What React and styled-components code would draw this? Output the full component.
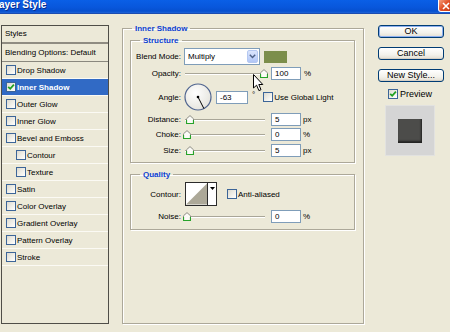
import React from 'react';
import styled, { createGlobalStyle } from 'styled-components';

const FONT = `"Liberation Sans", Arial, sans-serif`;

const GlobalStyle = createGlobalStyle`
  html, body { margin: 0; padding: 0; background: #ece9d8; }
  #root { width: 450px; height: 332px; overflow: hidden; }
  * { box-sizing: border-box; }
`;

const Window = styled.div`
  position: relative;
  width: 450px;
  height: 332px;
  display: flex;
  flex-direction: column;
  background: #ece9d8;
  font-family: ${FONT};
  font-size: 8px;
  color: #000;
  overflow: hidden;
`;

const TitleBar = styled.div`
  flex: none;
  height: 14px;
  display: flex;
  justify-content: space-between;
  align-items: flex-start;
  background: linear-gradient(180deg, #0a5fe6 0%, #0857dc 55%, #0650cf 85%, #1d63d8 100%);
  border-bottom: 1px solid #1b4cb0;
`;

const TitleText = styled.span`
  font: bold 10px/10px ${FONT};
  color: #fff;
  text-shadow: 1px 1px 0 #0b2d8c;
  margin-left: -1px;
`;

const CloseButton = styled.span`
  flex: none;
  width: 15px;
  height: 12px;
  margin-right: -3px;
  background: linear-gradient(135deg, #f3a080 0%, #e2532a 45%, #c53a14 100%);
  border: 1px solid #fff;
  border-top: none;
  border-radius: 0 0 0 3px;
  display: flex;
  align-items: center;
  justify-content: center;
`;

const Body = styled.div`
  flex: 1;
  display: flex;
  align-items: flex-start;
`;

/* ---------- Styles list ---------- */
const StylesPanel = styled.div`
  flex: none;
  width: 108px;
  height: 299px;
  margin: 11px 0 0 1px;
  border: 1px solid #4f4e48;
  display: flex;
  flex-direction: column;
`;

const PanelHeader = styled.div`
  height: 18px;
  line-height: 16px;
  padding-left: 3px;
  border-bottom: 2px solid #8f8c82;
`;

const StyleRow = styled.div`
  height: ${p => p.$h || 17}px;
  display: flex;
  align-items: center;
  gap: 1px;
  padding-left: ${p => (p.$indent ? 14 : p.$plain ? 3 : 4)}px;
  border-bottom: 1px solid ${p => (p.$dark ? '#8a887e' : '#fbfaf4')};
  background: ${p => (p.$selected ? '#316ac5' : 'transparent')};
  color: ${p => (p.$selected ? '#fff' : '#000')};
  font-weight: ${p => (p.$selected ? 'bold' : 'normal')};
  white-space: nowrap;
`;

const Box = styled.span`
  flex: none;
  width: 10px;
  height: 10px;
  border: 1px solid #3c6598;
  background: linear-gradient(135deg, #dcdad0 0%, #f4f3ee 65%, #ffffff 100%);
  display: inline-flex;
  align-items: center;
  justify-content: center;
  margin-left: ${p => p.$ml || 0}px;
`;

const Tick = () => (
  <svg width="8" height="8" viewBox="0 0 8 8">
    <path d="M1.2 3.8 L3.2 5.8 L6.9 1.6" fill="none" stroke="#21a121" strokeWidth="1.8" />
  </svg>
);

const CheckBox = ({ checked, ml }) => <Box $ml={ml}>{checked && <Tick />}</Box>;

/* ---------- Group boxes ---------- */
const Group = styled.fieldset`
  flex: none;
  margin: ${p => p.$m || '0'};
  padding: ${p => p.$pad};
  width: ${p => (p.$w ? `${p.$w}px` : 'auto')};
  height: ${p => (p.$h ? `${p.$h}px` : 'auto')};
  border: 1px solid #aca899;
  box-shadow: inset 1px 1px 0 #fff, 1px 1px 0 #fff;
  min-width: 0;
`;

const Legend = styled.legend`
  margin-left: ${p => p.$ml}px;
  padding: 0 3px;
  font: bold 8px/11px ${FONT};
  color: #0b3fd1;
`;

const FieldRow = styled.div`
  display: flex;
  align-items: center;
  height: ${p => p.$h}px;
  margin-top: ${p => p.$mt || 0}px;
  white-space: nowrap;
`;

const Label = styled.span`
  flex: none;
  width: 50px;
  text-align: right;
`;

const Select = styled.div`
  flex: none;
  width: 76px;
  height: 17px;
  margin-left: 3px;
  border: 1px solid #7f9db9;
  background: #fff;
  display: flex;
  align-items: center;
  justify-content: space-between;
  padding: 1px 1px 1px 3px;
`;

const SelectButton = styled.span`
  flex: none;
  width: 11px;
  height: 13px;
  border: 1px solid #b5c8f1;
  border-radius: 2px;
  background: linear-gradient(180deg, #dbe5fc 0%, #c3d4fa 60%, #b1c6f6 100%);
  display: flex;
  align-items: center;
  justify-content: center;
`;

const Swatch = styled.span`
  flex: none;
  width: 23px;
  height: 12px;
  margin-left: 4px;
  background: #7c8e4b;
`;

const SliderBox = styled.div`
  flex: none;
  position: relative;
  width: 80px;
  height: 13px;
  margin-left: 4px;
  display: flex;
  align-items: center;
`;

const Track = styled.div`
  width: 100%;
  height: 2px;
  border-top: 1px solid #a9a698;
  border-bottom: 1px solid #fff;
`;

const Thumb = styled.svg`
  position: absolute;
  top: 2px;
`;

const Cursor = styled.svg`
  position: absolute;
  left: 68px;
  top: 7px;
`;

const NumInput = styled.span`
  flex: none;
  width: ${p => p.$w || 30}px;
  height: 13px;
  margin-left: ${p => p.$ml || 6}px;
  border: 1px solid #7f9db9;
  background: #fff;
  padding-left: 3px;
  line-height: 11px;
`;

const Unit = styled.span`
  margin-left: ${p => p.$ml || 3}px;
  align-self: ${p => (p.$raised ? 'flex-start' : 'center')};
  margin-top: ${p => (p.$raised ? 7 : 0)}px;
`;

const Dial = styled.svg`
  flex: none;
  margin-left: 3px;
`;

const ContourPicker = styled.div`
  flex: none;
  width: 32px;
  height: 24px;
  margin-left: 4px;
  border: 1px solid #2b2b2b;
  display: flex;
  background: #fff;
`;

const ContourArrow = styled.span`
  flex: none;
  width: 9px;
  border-left: 1px solid #2b2b2b;
  display: flex;
  justify-content: center;
  padding-top: 4px;
`;

const InlineLabel = styled.span`
  margin-left: 1px;
`;

/* ---------- Right column ---------- */
const RightColumn = styled.div`
  flex: none;
  width: 66px;
  margin: 11px 0 0 14px;
  display: flex;
  flex-direction: column;
  gap: 9px;
`;

const Button = styled.div`
  height: 13px;
  border: 1px solid #003c74;
  border-radius: 3px;
  background: linear-gradient(180deg, #ffffff 0%, #f3f2ec 60%, #e3ded2 100%);
  box-shadow: ${p => (p.$default ? 'inset 0 0 0 1px #8eb0ef' : 'inset 0 -1px 0 #d6d0c5')};
  font-size: 9px;
  line-height: 11px;
  text-align: center;
`;

const PreviewRow = styled.div`
  display: flex;
  align-items: center;
  height: 12px;
  margin-top: -3px;
  padding-left: 10px;
  gap: 2px;
  font-size: 9px;
`;

const PreviewFrame = styled.div`
  width: 50px;
  height: 51px;
  margin: -4px 0 0 7px;
  background: #d5d5d5;
  border: 1px solid #e2e2e0;
  display: flex;
  align-items: center;
  justify-content: center;
`;

const PreviewSquare = styled.div`
  width: 24px;
  height: 24px;
  background: #4c4c4a;
  box-shadow: inset -1px -2px 2px rgba(0, 0, 0, 0.55);
`;

const ThumbIcon = ({ x }) => (
  <Thumb width="8" height="10" viewBox="0 0 8 10" style={{ left: `${x}px` }}>
    <path d="M0.5 3.8 L4 0.6 L7.5 3.8 L7.5 8.5 L0.5 8.5 Z" fill="#fbfbf7" stroke="#8c8b82" strokeWidth="1" />
    <path d="M0.5 5 L0.5 8.5 L7.5 8.5 L7.5 5" fill="none" stroke="#27a32a" strokeWidth="1.2" />
  </Thumb>
);

const Slider = ({ at, children }) => (
  <SliderBox>
    <Track />
    <ThumbIcon x={at - 185 - 4} />
    {children}
  </SliderBox>
);

const styleItems = [
  { name: 'Drop Shadow' },
  { name: 'Inner Shadow', selected: true, checked: true },
  { name: 'Outer Glow' },
  { name: 'Inner Glow' },
  { name: 'Bevel and Emboss' },
  { name: 'Contour', indent: true },
  { name: 'Texture', indent: true },
  { name: 'Satin' },
  { name: 'Color Overlay' },
  { name: 'Gradient Overlay' },
  { name: 'Pattern Overlay' },
  { name: 'Stroke' },
];

const angle = -63;
const rad = (angle * Math.PI) / 180;
const dialEnd = { x: 14 + 13 * Math.cos(rad), y: 14 - 13 * Math.sin(rad) };

export default function App() {
  return (
    <Window>
      <GlobalStyle />
      <TitleBar>
        <TitleText>ayer Style</TitleText>
        <CloseButton>
          <svg width="8" height="8" viewBox="0 0 8 8">
            <path d="M1 1 L7 7 M7 1 L1 7" stroke="#fff" strokeWidth="1.6" />
          </svg>
        </CloseButton>
      </TitleBar>

      <Body>
        <StylesPanel>
          <PanelHeader>Styles</PanelHeader>
          <StyleRow $h={18} $dark $plain>Blending Options: Default</StyleRow>
          {styleItems.map(item => (
            <StyleRow key={item.name} $indent={item.indent} $selected={item.selected}>
              <CheckBox checked={item.checked} />
              <span>{item.name}</span>
            </StyleRow>
          ))}
        </StylesPanel>

        <Group $m="9px 0 0 13px" $pad="0 8px 0 7px" $w={242} $h={301}>
          <Legend $ml={2}>Inner Shadow</Legend>

          <Group $m="1px 0 0 0" $pad="0 0 5px 0">
            <Legend $ml={9}>Structure</Legend>
            <FieldRow $h={17} $mt={2}>
              <Label>Blend Mode:</Label>
              <Select>
                <span>Multiply</span>
                <SelectButton>
                  <svg width="7" height="5" viewBox="0 0 7 5">
                    <path d="M0.8 0.8 L3.5 3.6 L6.2 0.8" fill="none" stroke="#4d6185" strokeWidth="1.4" />
                  </svg>
                </SelectButton>
              </Select>
              <Swatch />
            </FieldRow>

            <FieldRow $h={13} $mt={2}>
              <Label>Opacity:</Label>
              <Slider at={264}>
                <Cursor width="11" height="18" viewBox="0 0 11 18">
                  <path
                    d="M0.5 0.5 L0.5 14 L3.6 11.2 L5.9 16.6 L8 15.7 L5.8 10.5 L9.8 10.5 Z"
                    fill="#fff"
                    stroke="#000"
                    strokeWidth="1"
                    strokeLinejoin="round"
                  />
                </Cursor>
              </Slider>
              <NumInput>100</NumInput>
              <Unit>%</Unit>
            </FieldRow>

            <FieldRow $h={28} $mt={3}>
              <Label>Angle:</Label>
              <Dial width="28" height="28" viewBox="0 0 28 28">
                <defs>
                  <radialGradient id="dialFill" cx="0.4" cy="0.35" r="0.7">
                    <stop offset="0" stopColor="#ffffff" />
                    <stop offset="1" stopColor="#e4e3dc" />
                  </radialGradient>
                </defs>
                <circle cx="14" cy="14" r="13" fill="url(#dialFill)" stroke="#4f648f" strokeWidth="1.2" />
                <line x1="14" y1="14" x2={dialEnd.x} y2={dialEnd.y} stroke="#000" strokeWidth="1" />
                <circle cx="14" cy="14" r="1.3" fill="#000" />
              </Dial>
              <NumInput $w={32} $ml={4}>-63</NumInput>
              <Unit $ml={4} $raised>°</Unit>
              <CheckBox ml={8} />
              <InlineLabel>Use Global Light</InlineLabel>
            </FieldRow>

            <FieldRow $h={13} $mt={2}>
              <Label>Distance:</Label>
              <Slider at={190} />
              <NumInput>5</NumInput>
              <Unit $ml={2}>px</Unit>
            </FieldRow>

            <FieldRow $h={13} $mt={2}>
              <Label>Choke:</Label>
              <Slider at={187} />
              <NumInput>0</NumInput>
              <Unit $ml={2}>%</Unit>
            </FieldRow>

            <FieldRow $h={13} $mt={3}>
              <Label>Size:</Label>
              <Slider at={190} />
              <NumInput>5</NumInput>
              <Unit $ml={2}>px</Unit>
            </FieldRow>
          </Group>

          <Group $m="6px 0 0 0" $pad="0 0 6px 0">
            <Legend $ml={9}>Quality</Legend>
            <FieldRow $h={24} $mt={2}>
              <Label>Contour:</Label>
              <ContourPicker>
                <svg width="22" height="22" viewBox="0 0 22 22">
                  <polygon points="0,22 22,0 22,22" fill="#aca898" />
                </svg>
                <ContourArrow>
                  <svg width="5" height="3" viewBox="0 0 5 3">
                    <polygon points="0,0 5,0 2.5,3" fill="#000" />
                  </svg>
                </ContourArrow>
              </ContourPicker>
              <CheckBox ml={10} />
              <InlineLabel>Anti-aliased</InlineLabel>
            </FieldRow>

            <FieldRow $h={13} $mt={4}>
              <Label>Noise:</Label>
              <Slider at={187} />
              <NumInput>0</NumInput>
              <Unit $ml={2}>%</Unit>
            </FieldRow>
          </Group>
        </Group>

        <RightColumn>
          <Button $default>OK</Button>
          <Button>Cancel</Button>
          <Button>New Style...</Button>
          <PreviewRow>
            <CheckBox checked />
            <span>Preview</span>
          </PreviewRow>
          <PreviewFrame>
            <PreviewSquare />
          </PreviewFrame>
        </RightColumn>
      </Body>
    </Window>
  );
}
